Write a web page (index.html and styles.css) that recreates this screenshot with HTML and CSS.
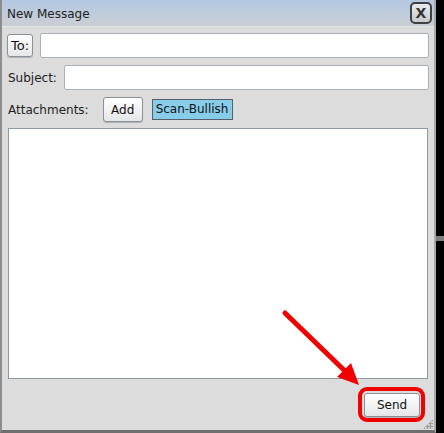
FILE: index.html
```html
<!DOCTYPE html>
<html lang="en">

<head>
    <meta charset="UTF-8">
    <title>New Message</title>
    <link rel="stylesheet" href="styles.css">
</head>

<body>
    <div class="screen">
        <div class="dialog">
            <div class="titlebar">
                <span class="title">New Message</span>
                <button class="close-btn">X</button>
            </div>

            <div class="content">
                <div class="row">
                    <button class="btn to-btn">To:</button>
                    <input class="field" type="text">
                </div>

                <div class="row subject-row">
                    <label class="label">Subject:</label>
                    <input class="field" type="text">
                </div>

                <div class="row attach-row">
                    <label class="label">Attachments:</label>
                    <button class="btn add-btn">Add</button>
                    <span class="tag">Scan-Bullish</span>
                </div>

                <textarea class="body-text"></textarea>

                <div class="footer">
                    <button class="btn send-btn">Send</button>
                    <span class="highlight"></span>
                </div>
            </div>

            <!-- annotation arrow pointing at Send -->
            <svg class="arrow" width="90" height="90" viewBox="0 0 90 90">
                <line x1="6" y1="6" x2="68" y2="66" stroke="#f00000" stroke-width="5" stroke-linecap="round" />
                <polygon points="80,78 58,70 72,56" fill="#f00000" />
            </svg>

            <span class="grip"></span>
        </div>
        <div class="side">
            <span class="side-bar"></span>
        </div>
    </div>
</body>

</html>
```

FILE: styles.css
```css
body {
    margin: 0;
    font-family: "DejaVu Sans", sans-serif;
    font-size: 12px;
    color: #111;
    background: #000;
}

.screen {
    display: flex;
    width: 444px;
    height: 433px;
}

/* Dialog window */
.dialog {
    position: relative;
    width: 432px;
    height: 430px;
    border-left: 2px solid #8c8c8c;
    border-right: 2px solid #a8a8a8;
    border-bottom: 3px solid #6e6e6e;
    background: #dcdcdc;
    display: flex;
    flex-direction: column;
}

.titlebar {
    height: 26px;
    background: linear-gradient(to bottom, #b3c8e2, #cbcfd4);
    display: flex;
    align-items: center;
    justify-content: space-between;
    padding: 0 2px 0 5px;
    box-sizing: border-box;
}

.title {
    color: #222;
    font-size: 12px;
    padding-top: 1px;
}

.close-btn {
    width: 22px;
    height: 22px;
    padding: 0;
    border: 2px solid #404040;
    border-radius: 5px;
    background: linear-gradient(to bottom, #e8eaec, #c6c9cc);
    font-family: "DejaVu Sans", sans-serif;
    font-size: 14px;
    font-weight: bold;
    color: #333;
    line-height: 16px;
}

.content {
    flex: 1;
    display: flex;
    flex-direction: column;
    padding: 6px 5px 0 5px;
    border-top: 1px solid #e4e4e4;
}

.row {
    display: flex;
    align-items: center;
    gap: 6px;
    margin-bottom: 7px;
}

.subject-row {
    gap: 7px;
}

.label {
    padding-left: 1px;
    color: #222;
}

.field {
    flex: 1;
    height: 25px;
    box-sizing: border-box;
    border: 1px solid #a9b0b6;
    border-radius: 2px;
    background: #fff;
    margin: 0;
}

.btn {
    font-family: "DejaVu Sans", sans-serif;
    font-size: 12px;
    color: #111;
    background: linear-gradient(to bottom, #ffffff, #e4e6e8);
    border: 1px solid #8a9097;
    border-radius: 3px;
    padding: 0;
    box-shadow: 0 1px 0 #b4b4b4;
}

.to-btn {
    width: 26px;
    height: 23px;
    margin-right: 1px;
    font-size: 13px;
}

.attach-row {
    margin-top: 0;
    margin-bottom: 6px;
}

.add-btn {
    width: 40px;
    height: 25px;
    margin-left: 8px;
}

.tag {
    margin-left: 3px;
    background: #87cdea;
    border: 1px solid #55606a;
    padding: 2px 4px 2px 3px;
    line-height: 15px;
}

.body-text {
    width: 420px;
    height: 251px;
    box-sizing: border-box;
    margin: 0 0 0 1px;
    border: 1px solid #8c9aa6;
    background: #fff;
    resize: none;
}

.footer {
    position: relative;
    display: flex;
    justify-content: flex-end;
    padding: 14px 9px 0 0;
}

.send-btn {
    width: 56px;
    height: 24px;
    font-size: 12px;
}

.highlight {
    position: absolute;
    right: 4px;
    top: 8px;
    width: 67px;
    height: 35px;
    box-sizing: border-box;
    border: 4px solid #f00000;
    border-radius: 9px;
}

.arrow {
    position: absolute;
    left: 277px;
    top: 307px;
}

.grip {
    position: absolute;
    right: 1px;
    bottom: 1px;
    width: 10px;
    height: 10px;
    background: radial-gradient(circle, #9a9a9a 1px, transparent 1.5px) 0 0 / 3px 3px;
    clip-path: polygon(100% 0, 100% 100%, 0 100%);
}

/* Dark area to the right of the window */
.side {
    flex: 1;
    display: flex;
    flex-direction: column;
    justify-content: flex-start;
    padding-top: 236px;
}

.side-bar {
    height: 5px;
    background: #7d7d7d;
}
```
